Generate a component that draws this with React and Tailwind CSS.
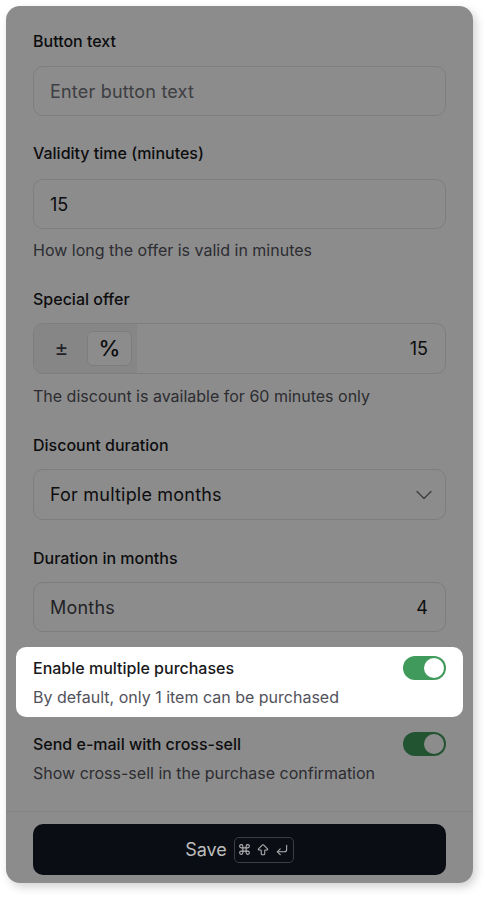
import { ChevronDown, Command, ArrowBigUp, CornerDownLeft } from 'lucide-react'

// ─── Offer settings sheet, dimmed with one row spotlighted ───

function Label({ children, className = '' }) {
  return <div className={`text-[16px] leading-6 font-medium text-[#18181b] ${className}`}>{children}</div>
}

function Help({ children, className = '' }) {
  return <div className={`text-[16px] leading-6 text-[#52525b] ${className}`}>{children}</div>
}

function Toggle() {
  return (
    <div className="w-[43px] h-[24px] rounded-full bg-[#409a5b] flex items-center justify-end px-[2px] shrink-0">
      <div className="w-[20px] h-[20px] rounded-full bg-white" />
    </div>
  )
}

function ToggleRow({ title, sub, spotlight }) {
  return (
    <div
      className={`-mx-[17px] px-[17px] pt-[9px] pb-[8px] rounded-[10px] flex justify-between ${
        spotlight ? 'relative z-20 bg-white' : ''
      }`}
    >
      <div>
        <Label>{title}</Label>
        <Help className="mt-[5px]">{sub}</Help>
      </div>
      <Toggle />
    </div>
  )
}

export default function App() {
  return (
    <div className="min-h-screen bg-white pt-[6px] pl-[6px]" style={{ fontFamily: 'Inter, "Noto Sans", sans-serif' }}>
      <div className="relative w-[467px] h-[877px] rounded-[14px] bg-white overflow-hidden flex flex-col shadow-[3px_4px_10px_rgba(0,0,0,0.18)]">
        {/* Body */}
        <div className="flex-1 px-[27px] pt-[23px]">
          <Label className="mb-[13px]">Button text</Label>
          <div className="h-[50px] rounded-[10px] border border-[#e4e4e7] flex items-center px-4 text-[18px] tracking-[0.2px] text-[#71717a]">
            Enter button text
          </div>

          <Label className="mt-[25px] mb-[14px]">Validity time (minutes)</Label>
          <div className="h-[50px] rounded-[10px] border border-[#e4e4e7] flex items-center px-4 text-[18px] text-[#18181b]">
            15
          </div>
          <Help className="mt-[9px]">How long the offer is valid in minutes</Help>

          <Label className="mt-[25px] mb-[12px]">Special offer</Label>
          <div className="h-[51px] rounded-[10px] border border-[#e4e4e7] flex items-stretch overflow-hidden">
            <div className="bg-[#f4f4f5] flex items-center gap-[3px] px-[5px]">
              <div className="w-[45px] h-[35px] flex items-center justify-center text-[21px] text-[#3f3f46]">±</div>
              <div className="w-[45px] h-[35px] flex items-center justify-center rounded-[6px] bg-white border border-[#e4e4e7] text-[22px] font-medium text-[#18181b]">
                %
              </div>
            </div>
            <div className="flex-1 flex items-center justify-end pr-[17px] text-[18px] text-[#18181b]">15</div>
          </div>
          <Help className="mt-[10px]">The discount is available for 60 minutes only</Help>

          <Label className="mt-[25px] mb-[12px]">Discount duration</Label>
          <div className="h-[51px] rounded-[10px] border border-[#e4e4e7] flex items-center justify-between pl-4 pr-[7px] text-[18px] tracking-[0.2px] text-[#18181b]">
            For multiple months
            <ChevronDown size={28} strokeWidth={1.2} className="text-[#71717a]" />
          </div>

          <Label className="mt-[26px] mb-[12px]">Duration in months</Label>
          <div className="h-[50px] rounded-[10px] border border-[#e4e4e7] flex items-center justify-between pl-4 pr-[17px] text-[18px] tracking-[0.2px] text-[#18181b]">
            <span className="text-[#3f3f46]">Months</span>
            <span>4</span>
          </div>

          <div className="mt-[15px] flex flex-col gap-[6px]">
            <ToggleRow spotlight title="Enable multiple purchases" sub="By default, only 1 item can be purchased" />
            <ToggleRow title="Send e-mail with cross-sell" sub="Show cross-sell in the purchase confirmation" />
          </div>
        </div>

        {/* Footer */}
        <div className="border-t border-[#f1f1f2] px-[27px] pt-3 pb-2">
          <button className="relative z-20 w-full h-[51px] rounded-[10px] bg-[#0b0d14] flex items-center justify-center gap-[7px] text-[18px] text-[#bdbdbd]">
            Save
            <span className="h-[26px] w-[60px] rounded-[5px] border border-[#3b3e47] flex items-center justify-center gap-[5px] text-[#b4b4b4]">
              <Command size={13} strokeWidth={2} />
              <ArrowBigUp size={14} strokeWidth={1.8} />
              <CornerDownLeft size={14} strokeWidth={1.8} />
            </span>
          </button>
        </div>

        {/* Dim overlay */}
        <div className="absolute inset-0 z-10 bg-black/45 pointer-events-none" />
      </div>
    </div>
  )
}
